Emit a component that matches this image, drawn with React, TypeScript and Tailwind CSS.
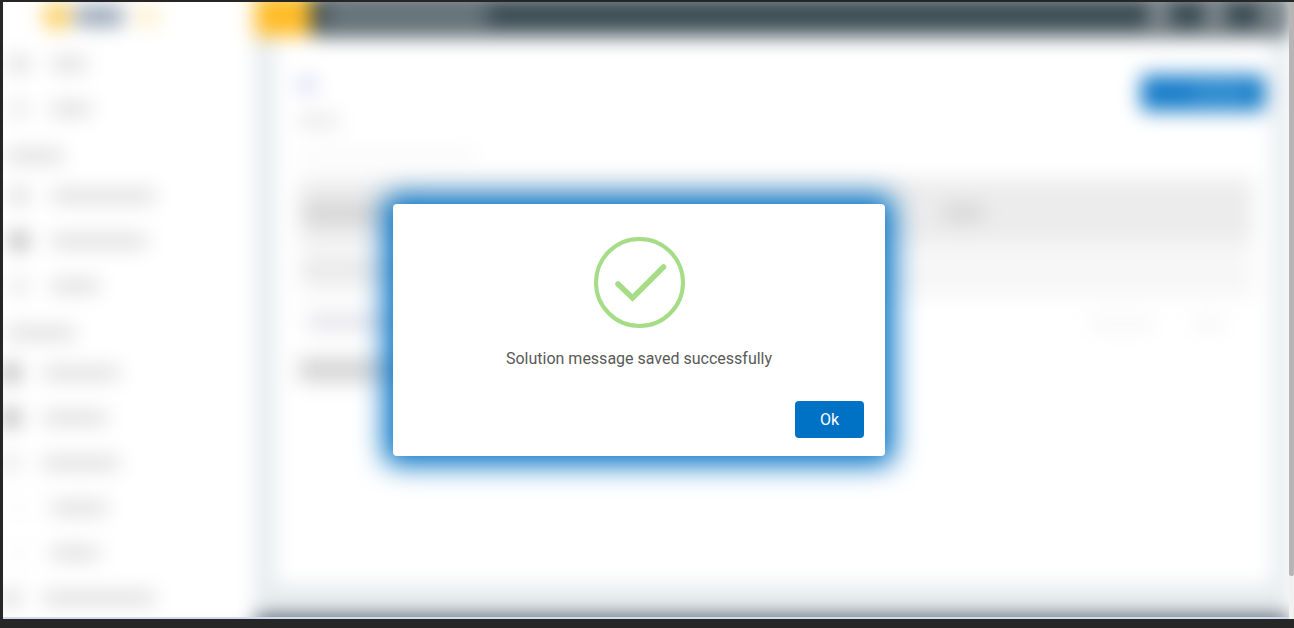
import { Check, User } from "lucide-react";

type MenuRow = {
  id: number;
  kind: "item" | "heading" | "group" | "child";
  width: string;
  icon?: string;
};

const menuRows: MenuRow[] = [
  { id: 1, kind: "item", width: "w-9", icon: "bg-neutral-300" },
  { id: 2, kind: "item", width: "w-10", icon: "bg-neutral-200" },
  { id: 3, kind: "heading", width: "w-14" },
  { id: 4, kind: "item", width: "w-26", icon: "bg-neutral-300" },
  { id: 5, kind: "item", width: "w-24", icon: "bg-neutral-400" },
  { id: 6, kind: "item", width: "w-12", icon: "bg-neutral-200" },
  { id: 7, kind: "heading", width: "w-17" },
  { id: 8, kind: "group", width: "w-19", icon: "bg-neutral-400" },
  { id: 9, kind: "group", width: "w-16", icon: "bg-neutral-400" },
  { id: 10, kind: "group", width: "w-19", icon: "bg-neutral-200" },
  { id: 11, kind: "child", width: "w-14", icon: "bg-neutral-50" },
  { id: 12, kind: "child", width: "w-12", icon: "bg-neutral-50" },
  { id: 13, kind: "group", width: "w-28", icon: "bg-neutral-300" },
];

const rowStyle: Record<MenuRow["kind"], string> = {
  item: "h-[45px] pl-2 gap-6",
  heading: "h-[42px] pl-1 pt-2",
  group: "h-[45px] pl-0 gap-6",
  child: "h-[45px] pl-2 gap-6",
};

function Sidebar() {
  return (
    <aside className="w-[252px] shrink-0 bg-white">
      <div className="flex h-[47px] items-center gap-1 pb-1 pl-10">
        <span className="size-7 rounded-full bg-[#fccf5c]" />
        <span className="h-5 w-12 bg-[#93a2b5]" />
        <span className="ml-2 h-5 w-6 bg-[#fff0cc]" />
      </div>
      <nav>
        {menuRows.map((row) => (
          <div key={row.id} className={`flex items-center ${rowStyle[row.kind]}`}>
            {row.icon && <span className={`size-4 shrink-0 ${row.icon}`} />}
            <span className={`h-3 bg-[#d8d8d8] ${row.width}`} />
          </div>
        ))}
      </nav>
    </aside>
  );
}

function Header() {
  return (
    <header className="flex h-[42px] shrink-0 items-center bg-[#3f4f57] text-white">
      <div className="h-full w-14 bg-[#ffbc26]" />
      <div className="ml-4 h-4 w-40 bg-[#7f8a90]" />
      <div className="ml-auto flex items-center gap-7 pr-1">
        <User className="size-7" strokeWidth={3} />
        <User className="size-7" strokeWidth={3} />
        <User className="size-7" strokeWidth={3} />
      </div>
    </header>
  );
}

function Panel() {
  return (
    <section className="mr-4 ml-5 flex-1 bg-white pt-[39px] pr-5 pl-6">
      <div className="flex items-start justify-between">
        <div className="space-y-6 pt-1">
          <div className="h-3 w-4 bg-[#c5c8f0]" />
          <div className="h-3 w-10 bg-neutral-200" />
          <div className="h-2 w-44 bg-neutral-100" />
        </div>
        <button
          type="button"
          aria-label="Add"
          className="-mr-3 flex h-9 w-31 items-center justify-center gap-3 rounded bg-[#1179c8]"
        >
          <Check className="size-5 text-[#5ba4da]" strokeWidth={3} />
          <span className="h-3 w-14 bg-[#459ad6]" />
        </button>
      </div>

      <table className="mt-5 w-full">
        <thead className="bg-[#ececec]">
          <tr className="h-[63px]">
            <th className="w-2/3 pt-1 pl-1">
              <div className="h-5 w-28 bg-neutral-300" />
            </th>
            <th className="pt-1 pl-2">
              <div className="h-4 w-10 bg-neutral-300" />
            </th>
          </tr>
        </thead>
        <tbody className="bg-[#f7f7f7]">
          <tr className="h-[56px]">
            <td className="pl-1">
              <div className="h-4 w-28 bg-neutral-200" />
            </td>
            <td />
          </tr>
        </tbody>
      </table>

      <div className="flex items-center justify-between pt-4 pr-7 pl-2">
        <div className="h-4 w-28 bg-[#e4e4ea]" />
        <div className="flex gap-10 pt-1">
          <div className="h-3 w-16 bg-neutral-100" />
          <div className="h-3 w-8 bg-neutral-100" />
        </div>
      </div>
      <div className="mt-7 h-6 w-36 bg-neutral-300" />
    </section>
  );
}

function SuccessDialog() {
  return (
    <div
      role="dialog"
      aria-labelledby="dialog-message"
      className="flex w-[492px] flex-col rounded bg-white px-[21px] pt-8 pb-[18px] shadow-[0_0_28px_9px_#0072c6]"
    >
      <svg viewBox="0 0 92 92" className="size-[92px] self-center" fill="none" stroke="#a5dc86">
        <circle cx="46.5" cy="46.5" r="43.5" strokeWidth="4" />
        <path d="M25 48 L39.5 62 L70.5 31" strokeWidth="5.5" strokeLinecap="round" />
      </svg>
      <p id="dialog-message" className="mt-[19px] text-center text-base text-[#595959]">
        Solution message saved successfully
      </p>
      <button type="button" className="mt-[30px] h-[37px] w-[69px] self-end rounded bg-[#0072c6] text-base text-white">
        Ok
      </button>
    </div>
  );
}

function App() {
  return (
    <div className="flex h-screen bg-[#262626] pt-0.5 pb-[9px] pl-[3px] font-[Roboto,sans-serif]">
      <div className="relative flex min-w-0 flex-1 flex-col overflow-hidden border-b-2 border-[#cfdced] bg-white">
        {/* Page behind the dialog */}
        <div className="-mt-2 -mb-4 flex min-h-0 flex-1 blur-[10px]">
          <Sidebar />
          <main className="flex min-w-0 flex-1 flex-col bg-[#e6ebee]">
            <Header />
            <Panel />
            <div className="mt-8 h-4 shrink-0 bg-[#37474f]" />
          </main>
        </div>

        {/* Dialog */}
        <div className="absolute inset-0 flex items-start justify-center pt-[202px] pr-[14px]">
          <SuccessDialog />
        </div>
      </div>

      {/* Scrollbar */}
      <div className="w-[5px] bg-[#f1f1f1]">
        <div className="h-[93%] rounded-b-xs bg-[#b6b4b4]" />
      </div>
    </div>
  );
}

export default App;
